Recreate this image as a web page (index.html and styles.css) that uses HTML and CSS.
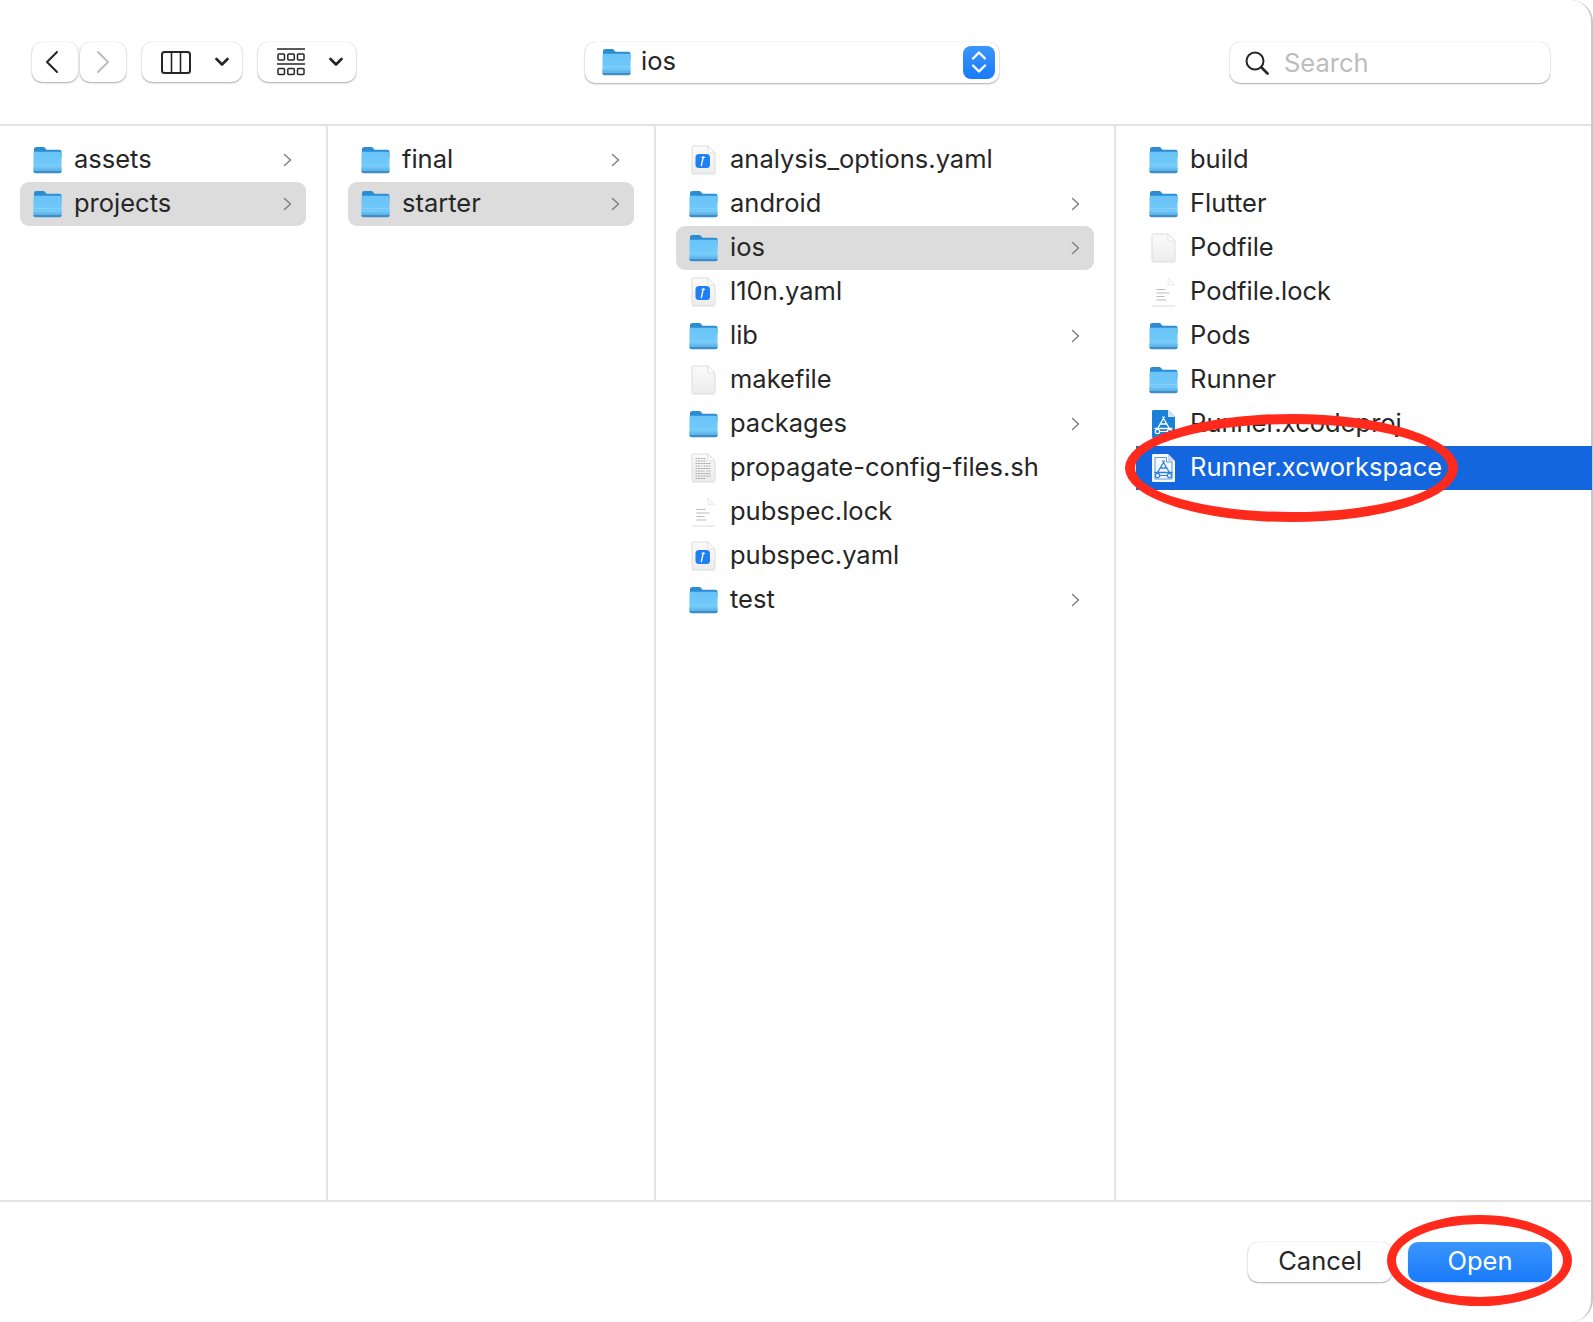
FILE: index.html
```html
<!DOCTYPE html>
<html lang="en">
<head>
<meta charset="utf-8">
<title>Open</title>
<link rel="stylesheet" href="styles.css">
</head>
<body>
<svg class="defs" aria-hidden="true">
  <defs>
    <linearGradient id="fbody" x1="0" y1="0" x2="0" y2="1"><stop offset="0" stop-color="#69c3f7"/><stop offset="1" stop-color="#75ccfc"/></linearGradient>
    <linearGradient id="page" x1="0" y1="0" x2="0" y2="1"><stop offset="0" stop-color="#fbfbfb"/><stop offset="1" stop-color="#ececec"/></linearGradient>
    <symbol id="folder" viewBox="0 0 29 28">
      <path d="M1 3.500C1 1.800 1.800 1 3.500 1h6.300c1 0 1.600.3 2.200 1l1.600 1.800h12.600c1.500 0 2.300.8 2.300 2.300V12H1z" fill="#2a8cd2"/>
      <path d="M.5 7.500c0-1 .7-1.700 1.700-1.700h24.600c1 0 1.700.7 1.700 1.700v17.300c0 1.400-.8 2.200-2.200 2.200H2.700C1.300 27 .5 26.200.5 24.800z" fill="url(#fbody)"/>
      <path d="M.5 21.500h28v3.300c0 1.400-.8 2.200-2.200 2.200H2.700C1.300 27 .5 26.200.5 24.800z" fill="#5fb6ec"/>
      <path d="M.5 25h28c0 1.300-.8 2.300-2.200 2.300H2.700C1.300 27.300.5 26.300.5 25z" fill="#3f8dc4"/>
      <path d="M.5 18.500h28M.5 22h28" stroke="#8ed6fb" stroke-width=".6"/>
    </symbol>
    <symbol id="blank" viewBox="0 0 26 30">
      <path d="M1.500 2.500c0-1 .5-1.500 1.500-1.500h14.500l7 7v19.500c0 1-.5 1.500-1.500 1.500H3c-1 0-1.500-.5-1.500-1.500z" fill="url(#page)" stroke="#d9d9d9" stroke-width=".9"/>
      <path d="M17.500 1v5.500c0 1 .5 1.500 1.500 1.500h5.500z" fill="#fff" stroke="#d2d2d2" stroke-width=".7"/>
    </symbol>
    <symbol id="yaml" viewBox="0 0 26 30">
      <use href="#blank" width="26" height="30"/>
      <rect x="5" y="9" width="14.500" height="14" rx="3.500" fill="#1f7ff5"/>
      <path d="M10.800 20.500l2-8.500" stroke="#fff" stroke-width="1.300" stroke-linecap="round"/>
      <path d="M11.500 12.300h2.800" stroke="#fff" stroke-width="1.100" stroke-linecap="round"/>
    </symbol>
    <symbol id="lines" viewBox="0 0 26 30">
      <path d="M1.500 29V1h16l7 7v21z" fill="#fff"/>
      <path d="M1.500 29h23" stroke="#dcdcdc" stroke-width="1"/>
      <path d="M17.500 1l7 7h-7z" fill="#fafafa" stroke="#e0e0e0" stroke-width=".6"/>
      <path d="M6 12.500h9M6 16h13M6 19.500h8M6 23h10" stroke="#bcbcbc" stroke-width="1.200"/>
    </symbol>
    <symbol id="shell" viewBox="0 0 26 30">
      <use href="#blank" width="26" height="30"/>
      <path d="M5 5.500h10M5 8h11M5 10.500h15M5 13h6M13 13h7M5 15.500h15M5 18h9M16 18h4M5 20.500h15M5 23h15M5 25.500h10" stroke="#a2a2a2" stroke-width=".9" stroke-dasharray="2 .6"/>
    </symbol>
    <symbol id="tool" viewBox="0 0 26 30">
      <path d="M13.800 8L6.800 20M12.200 8l7 12M9.500 15h7M4.500 19.500h17" fill="none" stroke="currentColor" stroke-width="1.300" stroke-linecap="round"/>
      <circle cx="7" cy="22.500" r="2.200" fill="none" stroke="currentColor" stroke-width="1.200"/>
      <circle cx="19" cy="22.500" r="2.200" fill="none" stroke="currentColor" stroke-width="1.200"/>
      <path d="M9.200 22.500h7.600" stroke="currentColor" stroke-width="1"/>
    </symbol>
    <symbol id="xcodeproj" viewBox="0 0 26 30">
      <path d="M1.500 2.500c0-1 .5-1.500 1.500-1.500h14.500l7 7v19.500c0 1-.5 1.500-1.500 1.500H3c-1 0-1.500-.5-1.500-1.500z" fill="#1a80d8"/>
      <path d="M17.500 1v7h7z" fill="#cfe6f8"/>
      <use href="#tool" width="26" height="30" class="tool-white"/>
    </symbol>
    <symbol id="workspace" viewBox="0 0 26 30">
      <path d="M1.500 2.500c0-1 .5-1.500 1.500-1.500h14.500l7 7v19.500c0 1-.5 1.500-1.500 1.500H3c-1 0-1.500-.5-1.500-1.500z" fill="#f5f9fe"/>
      <path d="M4.500 4.500h11.500v4.500h5.500v17H4.500z" fill="none" stroke="#4c8fe6" stroke-width=".9"/>
      <path d="M17.500 1v7h7z" fill="#c9d8ee"/>
      <use href="#tool" width="26" height="30" class="tool-blue"/>
    </symbol>
    <symbol id="chev" viewBox="0 0 9 14">
      <path d="M1.500 1.500l6 5.500-6 5.500" fill="none" stroke="#808080" stroke-width="1.500" stroke-linecap="round" stroke-linejoin="round"/>
    </symbol>
    <symbol id="drop" viewBox="0 0 14 10">
      <path d="M1.500 2l5.500 5.500L12.500 2" fill="none" stroke="#262626" stroke-width="2.600" stroke-linecap="round" stroke-linejoin="round"/>
    </symbol>
  </defs>
</svg>

<div class="window">
  <header class="toolbar">
    <div class="nav">
      <button class="btn btn-nav btn-back"><svg class="i-nav" viewBox="0 0 14 24"><path d="M12 2L2 12l10 10" fill="none" stroke="#262626" stroke-width="2" stroke-linecap="round" stroke-linejoin="round"/></svg></button>
      <button class="btn btn-nav"><svg class="i-nav" viewBox="0 0 14 24"><path d="M2 2l10 10L2 22" fill="none" stroke="#bdbdbd" stroke-width="2" stroke-linecap="round" stroke-linejoin="round"/></svg></button>
    </div>
    <button class="btn btn-view">
      <svg class="i-cols" viewBox="0 0 30 23"><rect x="1" y="1" width="28" height="21" rx="2.500" fill="none" stroke="#262626" stroke-width="2"/><path d="M10.500 1v21M19.500 1v21" stroke="#262626" stroke-width="1.600"/></svg>
      <svg class="i-drop"><use href="#drop"/></svg>
    </button>
    <button class="btn btn-group">
      <svg class="i-grid" viewBox="0 0 28 28"><path d="M0 1h28M0 16h28" stroke="#262626" stroke-width="1.500"/><g fill="none" stroke="#262626" stroke-width="1.500"><rect x="1" y="6" width="6.500" height="6" rx="1"/><rect x="10.800" y="6" width="6.500" height="6" rx="1"/><rect x="20.500" y="6" width="6.500" height="6" rx="1"/><rect x="1" y="20.500" width="6.500" height="6" rx="1"/><rect x="10.800" y="20.500" width="6.500" height="6" rx="1"/><rect x="20.500" y="20.500" width="6.500" height="6" rx="1"/></g></svg>
      <svg class="i-drop"><use href="#drop"/></svg>
    </button>
    <div class="btn pathbox">
      <svg class="ic-folder"><use href="#folder"/></svg>
      <span class="path-label">ios</span>
      <span class="stepper"><svg viewBox="0 0 16 24" class="i-step"><path d="M2 8.500l6-6 6 6M2 15.500l6 6 6-6" fill="none" stroke="#fff" stroke-width="2.400" stroke-linecap="round" stroke-linejoin="round"/></svg></span>
    </div>
    <div class="btn searchbox">
      <svg class="i-search" viewBox="0 0 24 24"><circle cx="10" cy="10" r="8.500" fill="none" stroke="#262626" stroke-width="2"/><path d="M16.500 16.500l6 6" stroke="#262626" stroke-width="2.600" stroke-linecap="round"/></svg>
      <span class="search-label">Search</span>
    </div>
  </header>

  <main class="browser">
    <section class="col">
      <div class="row"><svg class="ic"><use href="#folder"/></svg><span class="name">assets</span><svg class="chev"><use href="#chev"/></svg></div>
      <div class="row on"><svg class="ic"><use href="#folder"/></svg><span class="name">projects</span><svg class="chev"><use href="#chev"/></svg></div>
    </section>
    <section class="col">
      <div class="row"><svg class="ic"><use href="#folder"/></svg><span class="name">final</span><svg class="chev"><use href="#chev"/></svg></div>
      <div class="row on"><svg class="ic"><use href="#folder"/></svg><span class="name">starter</span><svg class="chev"><use href="#chev"/></svg></div>
    </section>
    <section class="col">
      <div class="row"><svg class="ic doc"><use href="#yaml"/></svg><span class="name">analysis_options.yaml</span></div>
      <div class="row"><svg class="ic"><use href="#folder"/></svg><span class="name">android</span><svg class="chev"><use href="#chev"/></svg></div>
      <div class="row on"><svg class="ic"><use href="#folder"/></svg><span class="name">ios</span><svg class="chev"><use href="#chev"/></svg></div>
      <div class="row"><svg class="ic doc"><use href="#yaml"/></svg><span class="name">l10n.yaml</span></div>
      <div class="row"><svg class="ic"><use href="#folder"/></svg><span class="name">lib</span><svg class="chev"><use href="#chev"/></svg></div>
      <div class="row"><svg class="ic doc"><use href="#blank"/></svg><span class="name">makefile</span></div>
      <div class="row"><svg class="ic"><use href="#folder"/></svg><span class="name">packages</span><svg class="chev"><use href="#chev"/></svg></div>
      <div class="row"><svg class="ic doc"><use href="#shell"/></svg><span class="name">propagate-config-files.sh</span></div>
      <div class="row"><svg class="ic doc"><use href="#lines"/></svg><span class="name">pubspec.lock</span></div>
      <div class="row"><svg class="ic doc"><use href="#yaml"/></svg><span class="name">pubspec.yaml</span></div>
      <div class="row"><svg class="ic"><use href="#folder"/></svg><span class="name">test</span><svg class="chev"><use href="#chev"/></svg></div>
    </section>
    <section class="col col-last">
      <div class="row"><svg class="ic"><use href="#folder"/></svg><span class="name">build</span></div>
      <div class="row"><svg class="ic"><use href="#folder"/></svg><span class="name">Flutter</span></div>
      <div class="row"><svg class="ic doc"><use href="#blank"/></svg><span class="name">Podfile</span></div>
      <div class="row"><svg class="ic doc"><use href="#lines"/></svg><span class="name">Podfile.lock</span></div>
      <div class="row"><svg class="ic"><use href="#folder"/></svg><span class="name">Pods</span></div>
      <div class="row"><svg class="ic"><use href="#folder"/></svg><span class="name">Runner</span></div>
      <div class="row"><svg class="ic doc"><use href="#xcodeproj"/></svg><span class="name">Runner.xcodeproj</span></div>
      <div class="row picked"><svg class="ic doc"><use href="#workspace"/></svg><span class="name">Runner.xcworkspace</span></div>
    </section>
  </main>

  <footer class="footer">
    <button class="btn btn-act">Cancel</button>
    <button class="btn btn-act btn-open">Open</button>
  </footer>
</div>

<div class="ring ring-file"></div>
<div class="ring ring-open"></div>
</body>
</html>
```

FILE: styles.css
```css
* { box-sizing: border-box; }

html, body {
  margin: 0;
  height: 1322px;
  background: #fff;
  overflow: hidden;
}

body {
  position: relative;
  font-family: Inter, "Liberation Sans", sans-serif;
  color: #262626;
}

.defs { position: absolute; width: 0; height: 0; }

.tool-white { color: #fff; }
.tool-blue { color: #2f7fe6; }

.window {
  width: 1593px;
  height: 1322px;
  display: flex;
  flex-direction: column;
  background: #fff;
  border-right: 2px solid #c9c9c9;
  border-top-right-radius: 22px;
  border-bottom-right-radius: 22px;
}

/* toolbar */
.toolbar {
  height: 126px;
  flex: none;
  display: flex;
  align-items: center;
  padding-left: 32px;
  border-bottom: 2px solid #e3e3e3;
}

.btn {
  border: 0;
  padding: 0;
  font: inherit;
  color: inherit;
  background: #fff;
  border-radius: 10px;
  box-shadow: 0 1px 2px rgba(0, 0, 0, .32), 0 0 1px rgba(0, 0, 0, .22);
}

.nav { display: flex; gap: 2px; }

.btn-nav {
  width: 46px;
  height: 40px;
  display: flex;
  align-items: center;
  justify-content: center;
}

.btn-back { padding-right: 6px; }

.i-nav { width: 14px; height: 24px; display: block; }

.btn-view, .btn-group {
  height: 40px;
  display: flex;
  align-items: center;
  margin-left: 16px;
}

.btn-view { width: 100px; padding-left: 19px; gap: 24px; }
.btn-group { width: 98px; padding-left: 19px; gap: 24px; }

.i-cols { width: 30px; height: 23px; display: block; }
.i-grid { width: 28px; height: 28px; display: block; }
.i-drop { width: 14px; height: 10px; display: block; }

.pathbox {
  width: 414px;
  height: 41px;
  margin-left: 229px;
  display: flex;
  align-items: center;
  padding: 0 4px 0 17px;
}

.ic-folder { width: 29px; height: 28px; display: block; }

.path-label { font-size: 25.500px; margin-left: 10px; padding-bottom: 4px; flex: 1; }

.stepper {
  width: 32px;
  height: 33px;
  border-radius: 8px;
  background: linear-gradient(#3a95fc, #1a7bfa);
  display: flex;
  align-items: center;
  justify-content: center;
}

.i-step { width: 16px; height: 24px; display: block; }

.searchbox {
  width: 320px;
  height: 41px;
  margin-left: 231px;
  display: flex;
  align-items: center;
  padding-left: 15px;
  box-shadow: 0 1px 1.500px rgba(0, 0, 0, .3), 0 0 1px rgba(0, 0, 0, .25);
}

.i-search { width: 24px; height: 24px; display: block; margin-top: 2px; }

.search-label { font-size: 25.500px; color: #bdbdbd; margin-left: 15px; }

/* columns */
.browser {
  flex: 1;
  min-height: 0;
  display: grid;
  grid-template-columns: 328px 328px 460px 1fr;
}

.col {
  padding: 12px 20px 0 20px;
  border-right: 2px solid #e3e3e3;
}

.col-last { padding-right: 0; border-right: 0; }

.row {
  height: 44px;
  display: flex;
  align-items: center;
  padding: 0 14px 0 13px;
  border-radius: 9px;
  font-size: 25.500px;
}

.row.on { background: #dcdcdc; }

.row.picked {
  background: #1366dd;
  color: #fff;
  border-radius: 0;
  margin-right: -1px;
  position: relative;
}

.ic { width: 29px; height: 28px; flex: none; display: block; }
.ic.doc { height: 30px; }

.name { margin-left: 12px; padding-bottom: 4px; flex: 1; white-space: nowrap; }

.chev { width: 9px; height: 14px; flex: none; display: block; }

/* footer */
.footer {
  height: 122px;
  flex: none;
  display: flex;
  align-items: flex-start;
  justify-content: flex-end;
  gap: 16px;
  padding: 40px 39px 0 0;
  border-top: 2px solid #e3e3e3;
}

.btn-act {
  width: 144px;
  height: 40px;
  padding-bottom: 4px;
  font-size: 25.500px;
  text-align: center;
}

.btn-open {
  color: #fff;
  background: linear-gradient(#3a95fc, #1a7bfa);
  box-shadow: 0 1px 2px rgba(30, 120, 250, .25);
}

/* red annotation rings, drawn over the screenshot */
.ring {
  position: absolute;
  border: 10px solid #ff2a1c;
  border-radius: 50%;
  pointer-events: none;
}

.ring-file { left: 1125px; top: 414px; width: 333px; height: 108px; }
.ring-open { left: 1387px; top: 1215px; width: 185px; height: 91px; border-width: 9px; }
```
